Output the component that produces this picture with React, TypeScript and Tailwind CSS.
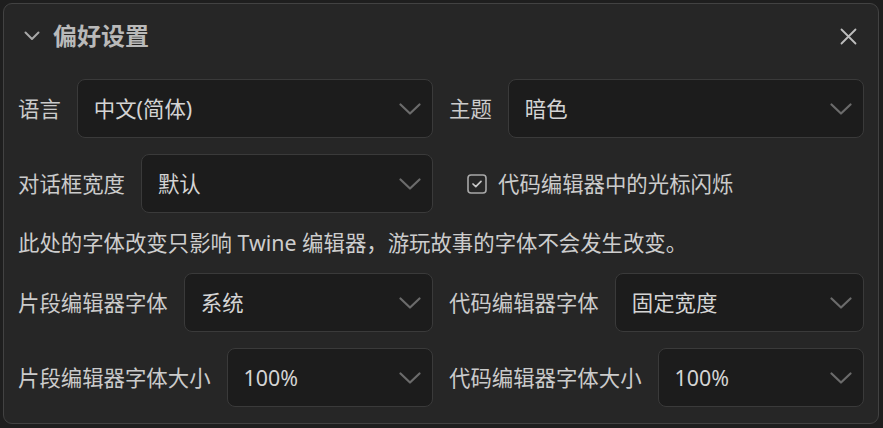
import React from 'react';

const font = { fontFamily: '"Noto Sans", "Noto Sans CJK SC", sans-serif' };

function Chevron() {
    return (
        <svg width="22" height="12" viewBox="0 0 22 12" fill="none" className="shrink-0">
            <path d="M1.5 1.5 L11 10.5 L20.5 1.5" stroke="#6b6b6b" strokeWidth="2.2" strokeLinecap="round" strokeLinejoin="round" />
        </svg>
    );
}

function Select({ value }: { value: string }) {
    return (
        <div className="flex-1 h-[59px] rounded-lg border border-[#3a3a3a] bg-[#1c1c1c] flex items-center justify-between pl-4 pr-[11px] text-[#d4d4d4]">
            <span>{value}</span>
            <Chevron />
        </div>
    );
}

function Field({ label, value }: { label: string; value: string }) {
    return (
        <div className="flex items-center gap-4">
            <span className="whitespace-nowrap text-[#cbcbcb]">{label}</span>
            <Select value={value} />
        </div>
    );
}

export default function App() {
    return (
        <div className="w-[883px] h-[428px] bg-[#1e1e1e] pt-[3px] pl-[3px]" style={font}>
            <div className="w-[876px] h-[421px] rounded-[9px] border border-[#424242] bg-[#262626] text-[21.4px] leading-none">
                <div className="h-[64px] flex items-center pl-[20px] pr-[20px]">
                    <svg width="16" height="10" viewBox="0 0 16 10" fill="none">
                        <path d="M1.5 1.5 L8 8 L14.5 1.5" stroke="#a8a8a8" strokeWidth="2" strokeLinecap="round" strokeLinejoin="round" />
                    </svg>
                    <span className="ml-[13px] text-[24px] font-bold text-[#b9b9b9]">偏好设置</span>
                    <svg width="17" height="17" viewBox="0 0 17 17" fill="none" className="ml-auto mr-[1px]">
                        <path d="M1.5 1.5 L15.5 15.5 M15.5 1.5 L1.5 15.5" stroke="#bdbdbd" strokeWidth="1.8" strokeLinecap="round" />
                    </svg>
                </div>
                <div className="pt-[11px] px-[14px] flex flex-col gap-4">
                    <div className="grid grid-cols-2 gap-x-4">
                        <Field label="语言" value="中文(简体)" />
                        <Field label="主题" value="暗色" />
                    </div>
                    <div className="grid grid-cols-2 gap-x-4">
                        <Field label="对话框宽度" value="默认" />
                        <div className="flex items-center pl-[18px] gap-[11px]">
                            <svg width="20" height="20" viewBox="0 0 20 20" fill="none">
                                <rect x="1" y="1" width="18" height="18" rx="3" stroke="#a8a8a8" strokeWidth="1.6" />
                                <path d="M6 10 L8.8 12.6 L14 7.4" stroke="#c8c8c8" strokeWidth="1.7" strokeLinecap="round" strokeLinejoin="round" />
                            </svg>
                            <span className="text-[#cbcbcb]">代码编辑器中的光标闪烁</span>
                        </div>
                    </div>
                    <div className="h-[28px] flex items-center text-[#cdcdcd]">
                        此处的字体改变只影响 Twine 编辑器，游玩故事的字体不会发生改变。
                    </div>
                    <div className="grid grid-cols-2 gap-x-4">
                        <Field label="片段编辑器字体" value="系统" />
                        <Field label="代码编辑器字体" value="固定宽度" />
                    </div>
                    <div className="grid grid-cols-2 gap-x-4">
                        <Field label="片段编辑器字体大小" value="100%" />
                        <Field label="代码编辑器字体大小" value="100%" />
                    </div>
                </div>
            </div>
        </div>
    );
}
